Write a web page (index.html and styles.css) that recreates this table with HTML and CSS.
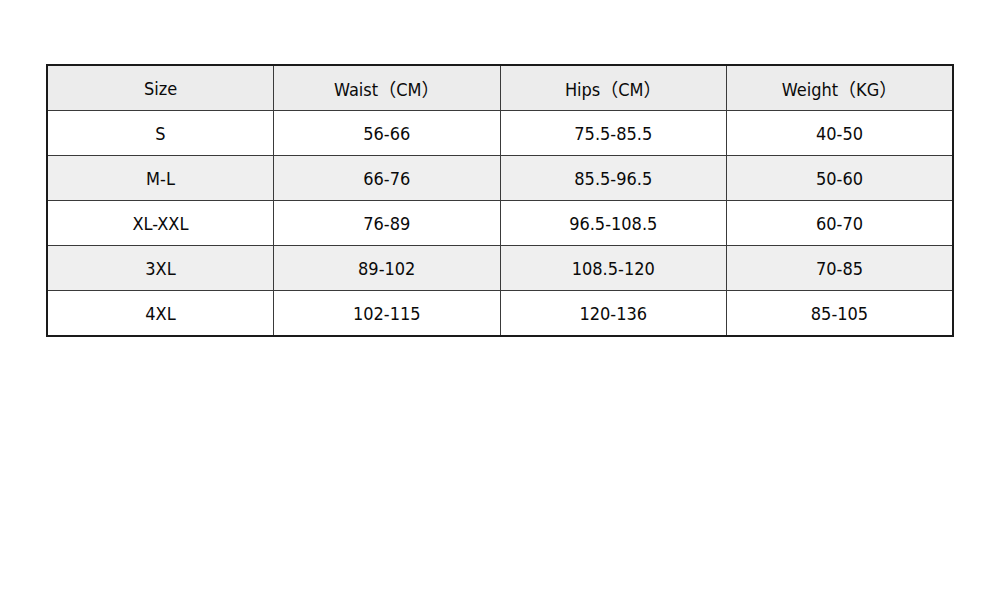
FILE: index.html
```html
<!DOCTYPE html>
<html>
<head>
<meta charset="utf-8">
<link rel="stylesheet" href="styles.css">
</head>
<body>
<div class="page">
  <table class="size-table">
    <thead>
      <tr class="head"><th>Size</th><th>Waist（CM）</th><th>Hips（CM）</th><th>Weight（KG）</th></tr>
    </thead>
    <tbody>
      <tr><td>S</td><td>56-66</td><td>75.5-85.5</td><td>40-50</td></tr>
      <tr class="alt"><td>M-L</td><td>66-76</td><td>85.5-96.5</td><td>50-60</td></tr>
      <tr><td>XL-XXL</td><td>76-89</td><td>96.5-108.5</td><td>60-70</td></tr>
      <tr class="alt"><td>3XL</td><td>89-102</td><td>108.5-120</td><td>70-85</td></tr>
      <tr><td>4XL</td><td>102-115</td><td>120-136</td><td>85-105</td></tr>
    </tbody>
  </table>
</div>
</body>
</html>
```
FILE: styles.css
```css
html, body {
  margin: 0;
  padding: 0;
  background: #ffffff;
}
.page {
  width: 1000px;
  height: 600px;
  padding: 64px 0 0 46px;
  box-sizing: border-box;
}
.size-table {
  width: 908px;
  border-collapse: collapse;
  table-layout: fixed;
  border: 2px solid #1a1a1a;
  font-family: "DejaVu Sans Condensed", "DejaVu Sans", "Noto Sans CJK SC", sans-serif;
  font-size: 18px;
  color: #0a0a0a;
}
.size-table th,
.size-table td {
  border: 1px solid #3a3a3a;
  height: 44px;
  padding: 0;
  text-align: center;
  vertical-align: middle;
  font-weight: normal;
}
.size-table .head th {
  height: 44px;
  background: #ececec;
}
.size-table .alt td {
  background: #efefef;
}
```
